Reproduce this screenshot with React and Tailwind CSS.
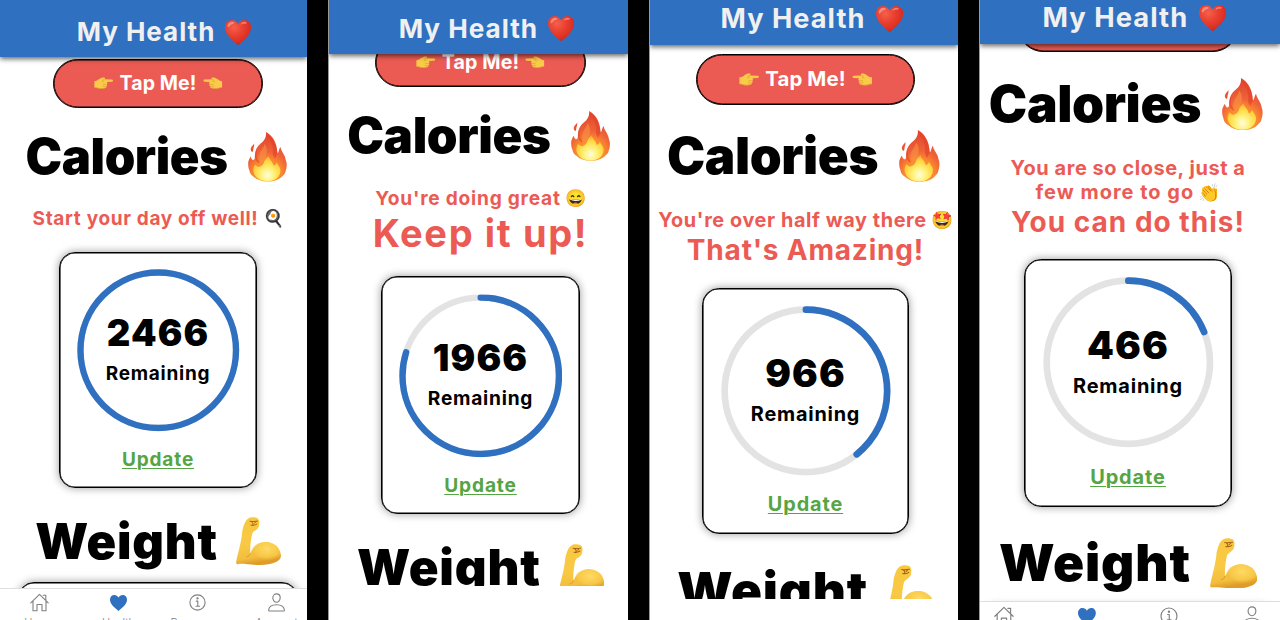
import { useId } from 'react'
import clsx from 'clsx'

// Every screen sets its own --spacing, so the whole layout scales with it.
const screens = [
  {
    frame: 'w-[307px] [--spacing:1px]',
    page: 'w-[316px]',
    header: 'h-[57px]',
    scroll: 'mt-[2px]',
    lines: [{ text: 'Start your day off well!', tracking: 'tracking-[0.035em]', emoji: '🍳' }],
    cardGap: 'mt-[21.5px]',
    remaining: 2466,
    footer: 'h-[32px]',
    nav: true,
  },
  {
    frame: 'w-[300px] border-l border-[#9a9a9a] [--spacing:1.006px]',
    page: 'w-[303px]',
    header: 'h-[54px]',
    scroll: 'mt-[-16px]',
    lines: [{ text: "You're doing great", tracking: 'tracking-[0.04em]', emoji: '😄' }],
    cheer: 'Keep it up!',
    cheerStyle: 'h-[47px] text-[38px] tracking-[0.043em]',
    cardGap: 'mt-[19.5px]',
    remaining: 1966,
    footer: 'h-[34px]',
  },
  {
    frame: 'w-[309px] border-l border-[#9a9a9a] [--spacing:1.045px]',
    page: 'w-[311px]',
    header: 'h-[45px]',
    scroll: 'mt-[9px]',
    lines: [{ text: "You're over half way there", tracking: 'tracking-[0.03em]', emoji: '🤩' }],
    cheer: "That's Amazing!",
    cheerStyle: 'h-[35px] text-[28px] tracking-[0.029em]',
    cardGap: 'mt-[20px]',
    remaining: 966,
    footer: 'h-[21px]',
  },
  {
    frame: 'w-[301px] border-l border-[#9a9a9a] [--spacing:1.05px]',
    page: 'w-[330px] -ml-[17px]',
    header: 'h-[44px]',
    scroll: 'mt-[-42.5px]',
    lines: [
      { text: 'You are so close, just a', tracking: 'tracking-[0.028em]' },
      { text: 'few more to go', tracking: 'tracking-[0.051em]', emoji: '👏' },
    ],
    cheer: 'You can do this!',
    cheerStyle: 'h-[34px] text-[28px] tracking-[0.036em]',
    cardGap: 'mt-[20px]',
    remaining: 466,
    footer: 'h-[19px]',
    nav: true,
  },
]

const DAILY_GOAL = 2466

function HeartEmoji() {
  const id = useId()
  return (
    <svg className="h-25 w-26 shrink-0" viewBox="0 0 26 25">
      <defs>
        <radialGradient id={id} cx="0.35" cy="0.3" r="0.8">
          <stop offset="0" stopColor="#f5604c" />
          <stop offset="0.4" stopColor="#ea4131" />
          <stop offset="0.8" stopColor="#d92c20" />
          <stop offset="1" stopColor="#a81713" />
        </radialGradient>
      </defs>
      <path fill={`url(#${id})`} d="M13 4.200C14.400 1.400 16.700 0 19.200 0 23.200 0 26 3 26 7c0 7.200-6.500 13.200-13 18C6.500 20.200 0 14.200 0 7 0 3 2.800 0 6.800 0 9.300 0 11.600 1.400 13 4.200Z" />
      <path fill="#fff" opacity="0.35" d="M2.500 5.500C3.200 2.800 5 1.600 7.200 1.700c1.800 0 2.600.8 2 1.600C8 4.200 5.800 4 4.300 6.600 3.500 7.800 2.400 7 2.500 5.500ZM16 3.600c.8-1.500 2.300-2.200 4-1.900 1.600.3 2.400 1.300 1.400 1.700-1.400.4-3.400-.2-4.600.8C16 5 15.500 4.600 16 3.600Z" />
    </svg>
  )
}

function FireEmoji() {
  const id = useId()
  return (
    <svg className="h-50 w-39 shrink-0" viewBox="0 0 40 50" preserveAspectRatio="none">
      <defs>
        <radialGradient id={id} gradientUnits="userSpaceOnUse" cx="20" cy="42" r="38">
          <stop offset="0" stopColor="#ffb52e" />
          <stop offset="0.4" stopColor="#f9862f" />
          <stop offset="0.58" stopColor="#ef6339" />
          <stop offset="1" stopColor="#e2482f" />
        </radialGradient>
        <radialGradient id={`${id}i`} gradientUnits="userSpaceOnUse" cx="20" cy="43" r="19">
          <stop offset="0" stopColor="#fffde0" />
          <stop offset="0.35" stopColor="#fff27a" />
          <stop offset="0.75" stopColor="#ffd23c" />
          <stop offset="1" stopColor="#fda63a" />
        </radialGradient>
      </defs>
      <path fill={`url(#${id})`} d="M18.500 0C25 3.500 29.500 10 30 20c.1 1 .6 1.300 1 .5.800-2 1-4 2.200-5.500C34 19 36 20.500 37.800 24.500c1 2.500.7 3.500 1.600 5.500.6 3 .3 6-.9 9.500-.3 2-1.500 3-3 4.500-3 3.500-8.500 5.500-15.500 5.500-6 0-11-1.500-14.500-5C3 43 1.800 41 1.300 38 .2 36 0 32 .3 29.500c.9-2 1-3 2.500-5 .5 1.800 1 3 2.200 3.500C6.500 28 7 27 7 25c-.2-6 2-10.500 6-13.500C17 8.500 19 5 18.500 0Z" />
      <path fill="#ea5230" d="M6.300 11.500c.2 2.500-.3 3.500-.8 5-.2 1.500 0 2.500-.9 3.500C3 19.500 2.400 17.800 3 16c.7-1.800 2.300-2.700 3.300-4.500Z" />
      <path fill="#e23f28" opacity="0.6" d="M19 3c4.500 4.500 7.300 10.500 6.500 18-.3 2.500 1.500 4 2 6 1-2.500 2.500-4 2.500-7C29.500 12 25.500 6 19 3ZM10 17c-1.500 3-1.500 6-.8 9 1 2 2.300 3 2.300 5.500C9 30 7.500 28 7.200 25 7 22 8 19 10 17Z" />
      <path fill="#f88f42" opacity="0.65" d="M17 12c-1 5-5.500 7-5.500 13 0 3 1.500 5 1.500 8 4-2 5-7 6-10 .800-3.500.5-8-2-11Z" />
      <path fill={`url(#${id}i)`} d="M21 24c1 4 4.500 5.500 5 9.500 1.500.5 2.500-1 3.500-3 1 3 4 4.500 3.800 8.500C33 44.500 28 49.300 20 49.300 12 49.300 6.500 45 5.500 39c-.2-3 .5-4.500 1.700-6.500 1.300 1.500 2.800 2.500 4.300 2.500 3.500-1 4.500-3 5.500-6 .7-2 2.500-3 4-5Z" />
    </svg>
  )
}

function BicepsEmoji() {
  const id = useId()
  return (
    <svg className="h-48 w-45 shrink-0" viewBox="0 0 45 48">
      <defs>
        <linearGradient id={id} x1="0" y1="0" x2="0.15" y2="1">
          <stop offset="0" stopColor="#f8c83e" />
          <stop offset="0.6" stopColor="#f8c945" />
          <stop offset="0.88" stopColor="#f3bd3e" />
          <stop offset="1" stopColor="#de9c28" />
        </linearGradient>
        <radialGradient id={`${id}b`} cx="0.55" cy="0.35" r="0.6">
          <stop offset="0" stopColor="#ffdb66" />
          <stop offset="0.7" stopColor="#f9cb4a" stopOpacity="0.7" />
          <stop offset="1" stopColor="#f0b336" stopOpacity="0" />
        </radialGradient>
      </defs>
      <path fill={`url(#${id})`} d="M9 5.500C10.500 2 13.500 0 16.500.2c3 0 6 .8 6.300 2.800.8 1.500.6 3 .3 4.500.2 2.500-1.600 4.500-4.600 6.500-1.300.8-2 1.500-2.500 3.500-1 5-2 11-1.800 19C17.500 29.500 22.500 25.300 29 25c9-.3 15.600 6.500 16 13.500.3 6-8.500 9.500-20.500 9.500C14 48 6 46 1.500 47.200.3 47.300 0 46 .3 44 1.500 38 5 26 6 17c.2-4.500 1.500-8.500 3-11.500Z" />
      <ellipse cx="29.500" cy="35" rx="14" ry="10" fill={`url(#${id}b)`} />
      <path fill="none" stroke="#d9962a" strokeWidth="0.900" strokeLinecap="round" d="M14.200 36.500c-.3 1.500-1.500 3-3.200 3.300" />
      <path fill="none" stroke="#a8601c" strokeWidth="1" strokeLinecap="round" d="M14 4.300c2.500.4 5 .2 7.500-.2M15 8.200c2 .4 4 0 5.800-1.200M15.500 4.600c1.500 1 1.800 2.500 1.300 3.500M20 4.500l-1.500 1.700" />
    </svg>
  )
}

function PointEmoji({ flip }) {
  return (
    <svg className={clsx('h-12 w-19.5 shrink-0', flip && '-scale-x-100')} viewBox="0 0 19.5 12.5">
      <path fill="#f9cb48" d="M0 4.300C2 4.300 3.500 3.500 5 2.200 6.800.7 8.500.2 10.300.5c1 .2 1 1.200.3 1.900L18.300 2.700c1.500.1 1.500 2.200 0 2.300l-5.500.3c1 .6 1 1.800.1 2.300.6.7.4 1.700-.5 2.100.3.8-.1 1.500-1 1.700-1.900.8-5.400 1-7.400.2C2.700 11.200 1.500 11 0 11Z" />
      <path fill="none" stroke="#dca033" strokeWidth="0.700" strokeLinecap="round" d="M8 5.200c.6-.6 1.200-1 2-1M9.300 7.700h3.300M9 9.800h3M10.300 2.500l-1.800.9" />
      <path fill="none" stroke="#e0a233" strokeWidth="0.700" d="M0 10.800c1.800 0 2.800.5 4.200 1 2 .5 5 .3 7-.5" />
    </svg>
  )
}

function Emoji({ children }) {
  return (
    <span className="flex size-20 shrink-0 items-center justify-center font-['Noto_Color_Emoji'] text-[calc(var(--spacing)*17)] leading-none tracking-normal">
      {children}
    </span>
  )
}

function ProgressRing({ value }) {
  const length = 2 * Math.PI * 78
  const fraction = value / DAILY_GOAL
  return (
    <div className="grid size-162.5 shrink-0 place-items-center *:[grid-area:1/1]">
      <svg className="size-full -rotate-90" viewBox="0 0 163 163" fill="none" strokeWidth="6.400">
        <circle cx="81.500" cy="81.500" r="78" stroke="#e3e3e3" />
        <circle
          cx="81.500"
          cy="81.500"
          r="78"
          stroke="#2f70c1"
          strokeLinecap="round"
          strokeDasharray={fraction === 1 ? undefined : `${fraction * length} ${length}`}
        />
      </svg>
      <div className="flex h-full flex-col items-center pt-41 text-black">
        <span className="flex h-46 items-center text-[calc(var(--spacing)*36.5)] leading-none font-black tracking-[0.03em]">
          {value}
        </span>
        <span className="flex h-34 items-center text-[calc(var(--spacing)*19)] leading-none tracking-[0.04em]">
          Remaining
        </span>
      </div>
    </div>
  )
}

function TabIcon({ name }) {
  if (name === 'Health') {
    return (
      <svg className="h-16 w-17" viewBox="0 0 17 16" fill="#2f70c1">
        <path d="M8.500 2.600C9.400.9 10.900 0 12.600 0 15.200 0 17 2 17 4.700c0 4.500-5 8.200-8.500 11.300C5 12.900 0 9.200 0 4.700 0 2 1.800 0 4.400 0 6.100 0 7.600.9 8.500 2.600Z" />
      </svg>
    )
  }
  return (
    <svg className="size-19" viewBox="0 0 19 19" fill="none" stroke="#808080" strokeWidth="1.100" strokeLinejoin="round" strokeLinecap="round">
      {name === 'Home' && (
        <path d="M.8 9.800 9.500 1.300l8.700 8.500M13.200 2.200h2.600v4.900M3 8v9.700h4V11.500h5v6.200h4V8" />
      )}
      {name === 'Resources' && (
        <>
          <circle cx="9.500" cy="9.500" r="7.600" />
          <path d="M8.200 8.100h1.600v5M8 13.200h3.500" />
          <circle cx="9.500" cy="5.400" r="0.600" fill="#808080" />
        </>
      )}
      {name === 'Account' && (
        <path d="M9.500.9c2.200 0 3.700 1.700 3.700 3.900S11.600 9.300 9.500 9.300 5.800 7 5.800 4.800 7.300.9 9.500.9ZM1.600 17.200c.2-3 3-5.500 7.900-5.500s7.700 2.500 7.900 5.500c0 .5-.2.8-.8.800H2.400c-.6 0-.8-.3-.8-.8Z" />
      )}
    </svg>
  )
}

function TabBar({ page }) {
  return (
    <nav className={clsx('grid shrink-0 grid-cols-4 border-t border-[#dedede] bg-white', page)}>
      {['Home', 'Health', 'Resources', 'Account'].map((name) => (
        <div key={name} className="flex flex-col items-center">
          <span className="flex h-27 items-center">
            <TabIcon name={name} />
          </span>
          <span className="mt-1.5 font-['Inter'] text-[calc(var(--spacing)*11)] leading-none font-light text-[#808080]">
            {name}
          </span>
        </div>
      ))}
    </nav>
  )
}

function Screen({ screen }) {
  return (
    <section className={clsx('flex h-full shrink-0 flex-col overflow-hidden bg-white', screen.frame)}>
      <header className={clsx('relative z-10 flex shrink-0 flex-col justify-end bg-[#2f70c1] shadow-[0_2px_5px_rgba(0,0,0,0.6)]', screen.header)}>
        <div className={clsx('flex h-50 shrink-0 items-center justify-center gap-10 pl-12', screen.page)}>
          <h1 className="text-[calc(var(--spacing)*26)] leading-none tracking-[0.038em] whitespace-nowrap text-[#f0f0f0]">My Health</h1>
          <HeartEmoji />
        </div>
      </header>

      <main className="min-h-0 flex-1 overflow-hidden">
        <div className={clsx('flex flex-col items-center', screen.page)}>
          <button
            className={clsx(
              'flex h-48.5 w-210 shrink-0 items-center justify-center gap-6 rounded-[calc(var(--spacing)*24.5)] border border-black bg-[#eb5b54] font-bold text-white shadow-[inset_0_0_0_0.6px_#000]',
              screen.scroll,
            )}
          >
            <PointEmoji />
            <span className="text-[calc(var(--spacing)*19.5)] leading-none tracking-[0.006em]">Tap Me!</span>
            <PointEmoji flip />
          </button>

          <h2 className="mt-18.5 flex h-61 shrink-0 items-center justify-center gap-20 pr-4 text-[calc(var(--spacing)*49)] leading-none font-black tracking-[-0.008em] text-black">
            Calories
            <FireEmoji />
          </h2>

          <div className="mt-20 flex shrink-0 flex-col items-center text-[#eb5b54]">
            {screen.lines.map((line) => (
              <p key={line.text} className={clsx('flex h-23 items-center gap-5 text-[calc(var(--spacing)*19)] leading-none whitespace-nowrap', line.tracking)}>
                {line.text}
                {line.emoji && <Emoji>{line.emoji}</Emoji>}
              </p>
            ))}
            {screen.cheer && (
              <p className={clsx('flex items-center leading-none whitespace-nowrap', screen.cheerStyle)}>{screen.cheer}</p>
            )}
          </div>

          <article
            className={clsx(
              'flex h-236 w-198 shrink-0 flex-col items-center rounded-[calc(var(--spacing)*16)] border border-black bg-white pt-16.5 shadow-[inset_0_0_0_0.6px_#000,0_0_9px_rgba(0,0,0,0.4)]',
              screen.cardGap,
            )}
          >
            <ProgressRing value={screen.remaining} />
            <a className="mt-16 flex h-24 items-center text-[calc(var(--spacing)*19)] leading-none tracking-[0.045em] text-[#55a544] underline decoration-1 underline-offset-2">
              Update
            </a>
          </article>

          <h2 className="mt-23.5 flex h-60 shrink-0 items-center justify-center gap-18 text-[calc(var(--spacing)*49)] leading-none font-black tracking-[0.016em] text-black">
            Weight
            <BicepsEmoji />
          </h2>
          <article className="mt-11 h-236 w-280 shrink-0 rounded-[calc(var(--spacing)*16)] border border-black bg-white shadow-[inset_0_0_0_0.6px_#000,0_0_9px_rgba(0,0,0,0.4)]" />
        </div>
      </main>

      <footer className={clsx('shrink-0 overflow-hidden bg-white', screen.footer)}>
        {screen.nav && <TabBar page={screen.page} />}
      </footer>
    </section>
  )
}

export default function App() {
  return (
    <div className="flex h-[620px] w-[1280px] justify-between overflow-hidden bg-black font-['Inter',sans-serif] font-bold">
      {screens.map((screen) => (
        <Screen key={screen.remaining} screen={screen} />
      ))}
    </div>
  )
}
